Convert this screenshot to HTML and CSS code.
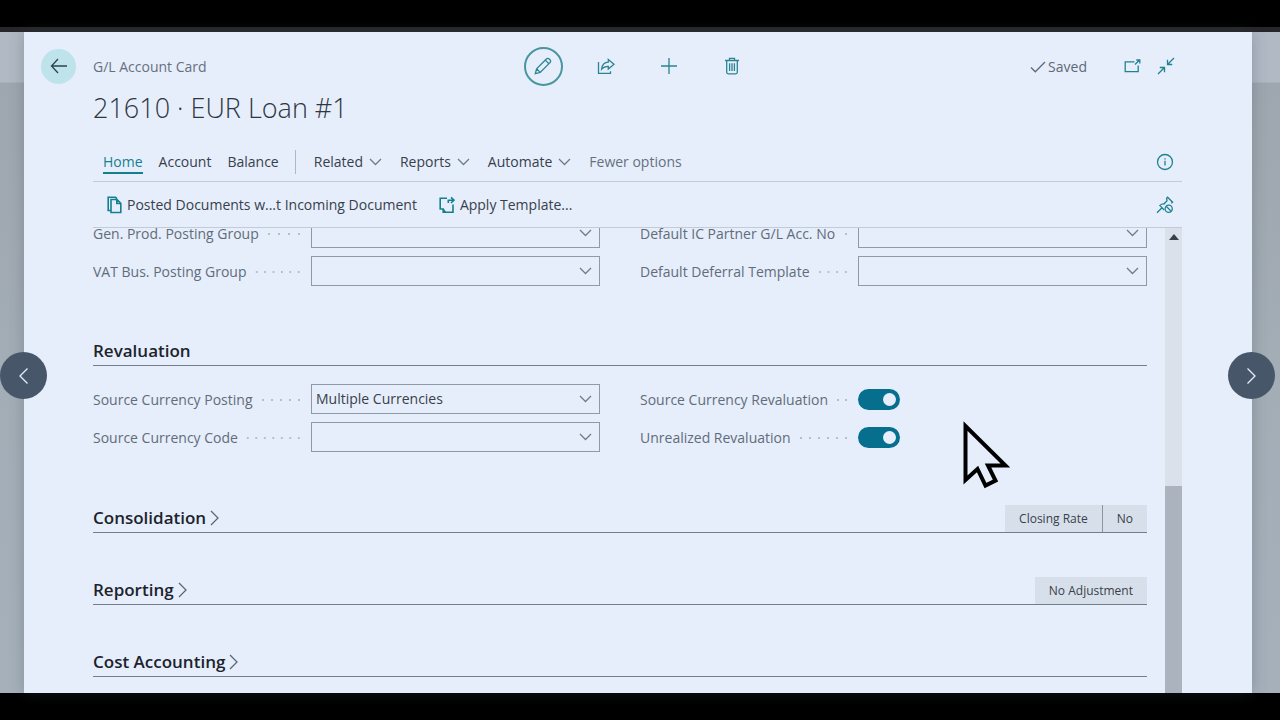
FILE: index.html
```
<!DOCTYPE html>
<html lang="en">
<head>
  <meta charset="UTF-8">
  <meta name="viewport" content="width=device-width, initial-scale=1">
  <title>G/L Account Card</title>
  <link rel="stylesheet" href="styles.css">
</head>
<body>
  <div class="stage">
    <main class="card">
      <header class="card-header">
        <div class="header-left">
          <button type="button" class="back" aria-label="Back">
            <svg width="18" height="16" viewBox="0 0 18 16"><path d="M17 8H1.5M8 1L1.5 8L8 15"/></svg>
          </button>
          <span class="page-type">G/L Account Card</span>
        </div>
        <div class="header-actions">
          <button type="button" class="icon-btn edit" aria-label="Edit">
            <svg width="18" height="18" viewBox="0 0 18 18"><path d="M1.3 16.7L2.6 11.8L12.6 1.8Q13.8 .8 15.3 2.1L15.9 2.7Q17.2 4.2 16.2 5.4L6.2 15.4ZM11.3 3.1L14.9 6.7M2.6 11.8L6.2 15.4"/></svg>
          </button>
          <button type="button" class="icon-btn" aria-label="Share">
            <svg width="18" height="17" viewBox="0 0 18 17"><path d="M1.5 4V15.3H13.5V13.2M11.3 1.5L17 6.3L11.3 11V8.3Q7 8.2 4.6 11.2Q5.3 4.5 11.3 4.2Z"/></svg>
          </button>
          <button type="button" class="icon-btn" aria-label="New">
            <svg width="18" height="18" viewBox="0 0 18 18"><path d="M9 1V17M1 9H17"/></svg>
          </button>
          <button type="button" class="icon-btn" aria-label="Delete">
            <svg width="16" height="18" viewBox="0 0 16 18"><path d="M1 3.5H15M5.5 3.5V1.3H10.5V3.5M2.7 3.5V15.3Q2.7 16.8 4.2 16.8H11.8Q13.3 16.8 13.3 15.3V3.5M5.6 6.3V14M8 6.3V14M10.4 6.3V14"/></svg>
          </button>
        </div>
        <div class="header-right">
          <span class="saved">
            <svg width="16" height="12" viewBox="0 0 16 12"><path d="M1 6.5L5.3 10.8L15 1"/></svg>Saved
          </span>
          <button type="button" class="small-btn" aria-label="Open in new window">
            <svg width="17" height="14" viewBox="0 0 17 14"><path d="M10.5 2.8H1.2V12.6H14.2V6.5M11 5.5L15.6 1M12.3 1H15.8V4.5"/></svg>
          </button>
          <button type="button" class="small-btn" aria-label="Collapse page">
            <svg width="18" height="18" viewBox="0 0 18 18"><path d="M17 1L10.5 7.5M10.5 2.8V7.5H15.2M1 17L7.5 10.5M2.8 10.5H7.5V15.2"/></svg>
          </button>
        </div>
      </header>

      <h1>21610 · EUR Loan #1</h1>

      <nav class="tabs">
        <a href="#home" class="active">Home</a>
        <a href="#account">Account</a>
        <a href="#balance">Balance</a>
        <span class="divider"></span>
        <button type="button" class="menu">Related <svg class="chevron" width="13" height="8" viewBox="0 0 13 8"><path d="M1 1L6.5 6.5L12 1"/></svg></button>
        <button type="button" class="menu">Reports <svg class="chevron" width="13" height="8" viewBox="0 0 13 8"><path d="M1 1L6.5 6.5L12 1"/></svg></button>
        <button type="button" class="menu">Automate <svg class="chevron" width="13" height="8" viewBox="0 0 13 8"><path d="M1 1L6.5 6.5L12 1"/></svg></button>
        <button type="button" class="menu fewer">Fewer options</button>
        <button type="button" class="small-btn end" aria-label="Details">
          <svg width="18" height="18" viewBox="0 0 18 18"><circle cx="9" cy="9" r="7.5"/><path d="M9 7.8V12.5M9 5.2V6.5"/></svg>
        </button>
      </nav>

      <div class="toolbar">
        <button type="button" class="tool">
          <svg width="15" height="18" viewBox="0 0 15 18"><path d="M3.5 14.5H1.2V1.2H8.5L10 2.6M4 3.5H10L13.8 7.3V16.5H4ZM9.8 3.7V7.5H13.6"/></svg>Posted Documents w...t Incoming Document
        </button>
        <button type="button" class="tool">
          <svg width="16" height="18" viewBox="0 0 16 18"><path d="M8 2.2H1.2V13H4.2V16.2H14V8.5M4.2 13.2L6.2 16M9.3 7V4.2H14.5M12 1.3L15 4.2L12 7"/></svg>Apply Template...
        </button>
        <button type="button" class="small-btn end" aria-label="Unpin">
          <svg width="18" height="18" viewBox="0 0 18 18"><path d="M1 16.8L6 11.8M8.2 14L3.8 9.4Q6 7.6 8 8L11 4.8L10.6 2.2L11.6 1.2L16.6 6.2L15.2 7.2"/><circle cx="12.7" cy="12.7" r="3.6"/><path d="M10.2 10.2L15.2 15.2"/></svg>
        </button>
      </div>

      <div class="scroll-area">
        <form class="content">
          <div class="fields">
            <div class="field">
              <label for="gen_prod">Gen. Prod. Posting Group</label>
              <span class="select"><select id="gen_prod"><option></option></select><svg class="chevron" width="13" height="8" viewBox="0 0 13 8"><path d="M1 1L6.5 6.5L12 1"/></svg></span>
            </div>
            <div class="field">
              <label for="ic_partner">Default IC Partner G/L Acc. No</label>
              <span class="select"><select id="ic_partner"><option></option></select><svg class="chevron" width="13" height="8" viewBox="0 0 13 8"><path d="M1 1L6.5 6.5L12 1"/></svg></span>
            </div>
            <div class="field">
              <label for="vat_bus">VAT Bus. Posting Group</label>
              <span class="select"><select id="vat_bus"><option></option></select><svg class="chevron" width="13" height="8" viewBox="0 0 13 8"><path d="M1 1L6.5 6.5L12 1"/></svg></span>
            </div>
            <div class="field">
              <label for="deferral">Default Deferral Template</label>
              <span class="select"><select id="deferral"><option></option></select><svg class="chevron" width="13" height="8" viewBox="0 0 13 8"><path d="M1 1L6.5 6.5L12 1"/></svg></span>
            </div>
          </div>

          <section>
            <div class="section-head"><h2>Revaluation</h2></div>
            <div class="fields">
              <div class="field">
                <label for="currency_posting">Source Currency Posting</label>
                <span class="select"><select id="currency_posting"><option>Multiple Currencies</option></select><svg class="chevron" width="13" height="8" viewBox="0 0 13 8"><path d="M1 1L6.5 6.5L12 1"/></svg></span>
              </div>
              <div class="field">
                <label for="currency_reval">Source Currency Revaluation</label>
                <input type="checkbox" class="toggle" id="currency_reval" checked>
              </div>
              <div class="field">
                <label for="currency_code">Source Currency Code</label>
                <span class="select"><select id="currency_code"><option></option></select><svg class="chevron" width="13" height="8" viewBox="0 0 13 8"><path d="M1 1L6.5 6.5L12 1"/></svg></span>
              </div>
              <div class="field">
                <label for="unrealized">Unrealized Revaluation</label>
                <input type="checkbox" class="toggle" id="unrealized" checked>
              </div>
            </div>
          </section>

          <section>
            <div class="section-head">
              <h2><button type="button">Consolidation<svg width="9" height="16" viewBox="0 0 9 16"><path d="M1 1L8 8L1 15"/></svg></button></h2>
              <div class="chips"><span>Closing Rate</span><span>No</span></div>
            </div>
          </section>

          <section>
            <div class="section-head">
              <h2><button type="button">Reporting<svg width="9" height="16" viewBox="0 0 9 16"><path d="M1 1L8 8L1 15"/></svg></button></h2>
              <div class="chips"><span>No Adjustment</span></div>
            </div>
          </section>

          <section>
            <div class="section-head">
              <h2><button type="button">Cost Accounting<svg width="9" height="16" viewBox="0 0 9 16"><path d="M1 1L8 8L1 15"/></svg></button></h2>
            </div>
          </section>
        </form>
        <div class="scrollbar">
          <svg width="10" height="6" viewBox="0 0 10 6"><path d="M0 6L5 0L10 6Z"/></svg>
          <div class="thumb"></div>
        </div>
      </div>
    </main>

    <button type="button" class="slide prev" aria-label="Previous">
      <svg width="11" height="18" viewBox="0 0 11 18"><path d="M9.5 1.5L2 9L9.5 16.5"/></svg>
    </button>
    <button type="button" class="slide next" aria-label="Next">
      <svg width="11" height="18" viewBox="0 0 11 18"><path d="M1.5 1.5L9 9L1.5 16.5"/></svg>
    </button>
    <svg class="pointer" width="48" height="70" viewBox="0 0 48 70"><path d="M3.5 6V60L15.5 49L23.5 65.5L33.5 60.5L26 45.5H43.5Z"/></svg>
  </div>
</body>
</html>
```
FILE: styles.css
```
* { box-sizing: border-box; }
body { margin: 0; height: 100vh; padding: 27px 0; background: #000; font-family: "Open Sans", "Noto Sans", sans-serif; font-size: 14px; line-height: 20px; color: #38404a; }
button { padding: 0; border: none; background: none; font: inherit; color: inherit; cursor: pointer; }
svg { fill: none; stroke: currentColor; stroke-width: 1.3; flex: none; }

.stage { position: relative; height: 100%; display: flex; padding: 0 28px 0 24px; border-top: 5px solid #27272b; background: linear-gradient(#b1b9c4 0, #b1b9c4 50px, #9ea6af 51px, #a3adb6 50%, #a6b0bb 100%); }
.card { flex: 1; min-width: 0; display: flex; flex-direction: column; background: #e6eefc; box-shadow: 0 0 14px rgba(60,70,80,0.3); }

.card-header { display: grid; grid-template-columns: 1fr auto 1fr; align-items: center; height: 54px; padding: 14px 18px 0 17px; }
.header-left, .header-right, .header-actions { display: flex; align-items: center; }
.header-left { gap: 17px; }
.back { display: flex; align-items: center; justify-content: center; width: 35px; height: 35px; border-radius: 50%; background: #bfe3ea; color: #2c4450; }
.page-type { padding-top: 2px; color: #66707d; }
.header-actions { gap: 24px; color: #2b8490; }
.icon-btn { display: flex; align-items: center; justify-content: center; width: 39px; height: 39px; border-radius: 50%; }
.edit { border: 2px solid #4a969f; }
.header-right { justify-content: flex-end; padding-right: 51px; }
.saved { display: flex; align-items: center; gap: 2px; margin-right: 28px; padding-top: 2px; color: #5f6975; }
.small-btn { display: flex; align-items: center; justify-content: center; width: 34px; height: 34px; color: #1f8290; }

h1 { margin: 0 69px; font-size: 27px; line-height: 44px; font-weight: 300; color: #2f3640; }

.tabs, .toolbar { display: flex; align-items: center; margin: 0 70px 0 69px; border-bottom: 1px solid #c3cbd8; }
.tabs { height: 52px; padding: 13px 0 0 10px; gap: 16px; }
.tabs a { color: inherit; text-decoration: none; border: solid transparent; border-width: 2px 0; }
.tabs .active { color: #15808c; border-bottom-color: #15808c; }
.divider { width: 1px; height: 24px; background: #b0b8c5; }
.menu { display: flex; align-items: center; gap: 6px; margin-left: 2px; }
.fewer { color: #66707d; }
.chevron { color: #717b88; }
.end { margin-left: auto; }
.toolbar { height: 46px; padding: 1px 0 0 14px; gap: 22px; }
.tool { display: flex; align-items: center; gap: 5px; }
.tool svg { color: #15808c; stroke-width: 1.6; }

.scroll-area { flex: 1; min-height: 0; display: flex; margin: 0 70px 0 69px; overflow: hidden; }
.content { flex: 1; margin-top: -10px; padding-right: 18px; }
.fields { display: grid; grid-template-columns: 1fr 1fr; gap: 8px 40px; }
.field { display: flex; align-items: center; height: 30px; }
.field label { display: flex; align-items: center; width: 43%; padding: 2px 8px 0 0; color: #626c79; white-space: nowrap; }
.field label::after { content: ""; flex: 1; height: 2px; margin-left: 6px; background: radial-gradient(circle, #b4becc 1px, transparent 1px) right center / 8px 2px space; }
.select { flex: 1; display: grid; align-items: center; }
.select select { grid-area: 1 / 1; width: 100%; height: 30px; padding: 0 4px; border: 1px solid #8f99a7; border-radius: 0; background: none; appearance: none; font: inherit; color: #38404a; }
.select svg { grid-area: 1 / 1; justify-self: end; margin-right: 8px; pointer-events: none; }
.toggle { appearance: none; width: 42px; height: 21px; margin: 0; padding: 4px; border-radius: 11px; background: #076f8e; }
.toggle::before { content: ""; display: block; width: 13px; height: 13px; border-radius: 50%; background: #e6eefc; }
.toggle:checked::before { margin-left: auto; }

section { margin-top: 50px; }
section + section { margin-top: 51px; }
section:nth-of-type(n+3) { margin-top: 42px; }
.section-head { display: flex; justify-content: space-between; align-items: flex-end; height: 30px; border-bottom: 1px solid #747e8b; }
.section-head + .fields { margin-top: 18px; }
h2 { margin: 0; font-size: 17px; line-height: 28px; font-weight: 600; color: #1c232c; }
h2 button { display: flex; align-items: center; gap: 4px; }
h2 svg { color: #5d6773; }
.chips { display: flex; gap: 1px; background: #8b95a3; font-size: 12px; line-height: 27px; }
.chips span { padding: 0 14px; background: #d7e0ea; }

.scrollbar { display: flex; flex-direction: column; align-items: center; width: 17px; padding-top: 6px; background: #dae1ea; }
.scrollbar svg { fill: #38404a; stroke: none; }
.thumb { width: 100%; height: 45%; margin-top: auto; background: #abb3be; }

.slide { position: absolute; top: 320px; display: flex; align-items: center; justify-content: center; width: 47px; height: 47px; border-radius: 50%; background: #48566a; color: #e6eefc; }
.prev { left: 0; }
.next { right: 5px; }
.pointer { position: absolute; left: 75%; top: 388px; margin-left: 2px; color: #000; stroke-width: 4; }
```
